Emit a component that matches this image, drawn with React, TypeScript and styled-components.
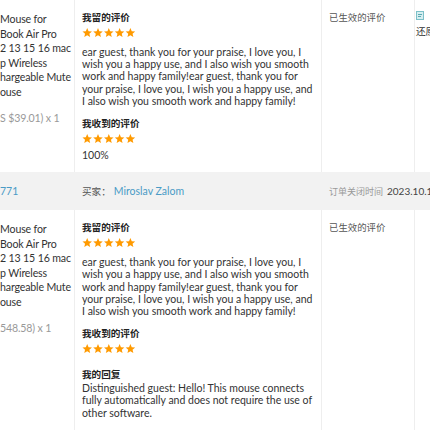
import styled, { createGlobalStyle } from 'styled-components';

const GlobalStyle = createGlobalStyle`
  html, body {
    margin: 0;
    padding: 0;
    background: #fff;
  }
  body {
    width: 430px;
    height: 430px;
    overflow: hidden;
    font-family: Lato, "Noto Sans CJK SC", sans-serif;
    color: #333;
  }
`

const StyleTable = styled.div`
  width: 470px;
  display: flex;
  flex-direction: column;
  border-bottom: 1px solid #e6e6e6;
`

const StyleRow = styled.div`
  display: grid;
  grid-template-columns: 75px 247px 93px 1fr;
`

const StyleCell = styled.div<{ $last?: boolean }>`
  padding: 11px 7px 11px;
  border-right: ${p => (p.$last ? 'none' : '1px solid #eeeeee')};
  min-width: 0;
`

const StyleProduct = styled.div`
  padding: 12px 0 10px;
  border-right: 1px solid #eeeeee;
  font-size: 10.6px;
  letter-spacing: -0.15px;
  line-height: 14.5px;
  color: #333;
  white-space: nowrap;
  overflow: hidden;
`

const StylePrice = styled.div`
  margin-top: 12px;
  color: #999;
`

const StyleTitle = styled.div<{ $gap?: number }>`
  font-size: 9.6px;
  line-height: 14px;
  font-weight: 700;
  color: #222;
  margin-top: ${p => p.$gap ?? 0}px;
`

const StyleText = styled.p<{ $gap?: number }>`
  margin: ${p => p.$gap ?? 8}px 0 0;
  font-size: 10.5px;
  line-height: 12.2px;
  color: #333;
`

const StyleStars = styled.svg`
  display: block;
  margin-top: 2px;
`

const StyleStatus = styled.div`
  font-size: 9.4px;
  line-height: 14px;
  color: #555;
`

const StyleAction = styled.div`
  display: flex;
  flex-direction: column;
  gap: 5px;
  font-size: 9.6px;
  line-height: 14px;
  color: #333;
`

const StyleBar = styled(StyleRow)`
  background: #f2f2f2;
  height: 38px;
  align-items: center;
  font-size: 10.5px;
`

const StyleBarCell = styled.div<{ $flush?: boolean }>`
  padding-left: ${p => (p.$flush ? 0 : 7)}px;
  white-space: nowrap;
`

const StyleLink = styled.span`
  color: #4a9bc6;
`

const StyleBuyer = styled.span`
  color: #555;
  font-size: 9.6px;
  margin-right: 3px;
`

const StyleMuted = styled.span`
  color: #999;
  font-size: 9px;
  margin-right: 4px;
`

const StyleDate = styled.span`
  color: #444;
  font-size: 10px;
`

const STAR = 'M5 0.4 L6.35 3.55 L9.75 3.85 L7.15 6.1 L7.95 9.5 L5 7.7 L2.05 9.5 L2.85 6.1 L0.25 3.85 L3.65 3.55 Z'

function Stars() {
  return (
    <StyleStars width="56" height="11" viewBox="0 0 56 11">
      {[0, 1, 2, 3, 4].map(i => (
        <path key={i} d={STAR} transform={`translate(${i * 10.8 + 0.2} 0.6)`} fill="#ff9a00" />
      ))}
    </StyleStars>
  )
}

const praise =
  'ear guest, thank you for your praise, I love you, I wish you a happy use, and I also wish you smooth work and happy family!ear guest, thank you for your praise, I love you, I wish you a happy use, and I also wish you smooth work and happy family!'

interface Review {
  product: string[]
  price: string
  received?: string
  reply?: string
  action?: boolean
}

const reviews: Review[] = [
  {
    product: ['Mouse for', 'Book Air Pro', '2 13 15 16 mac', 'p Wireless', 'hargeable Mute', 'ouse'],
    price: 'S $39.01) x 1',
    received: '100%',
    action: true,
  },
  {
    product: ['Mouse for', 'Book Air Pro', '2 13 15 16 mac', 'p Wireless', 'hargeable Mute', 'ouse'],
    price: '548.58) x 1',
    reply: 'Distinguished guest: Hello! This mouse connects fully automatically and does not require the use of other software.',
  },
]

function EditIcon() {
  return (
    <svg width="8" height="9" viewBox="0 0 8 9">
      <rect x="0.5" y="0.5" width="7" height="8" fill="#d6eef0" stroke="#7cc0c8" />
      <rect x="2" y="3" width="4" height="1" fill="#5aa9b3" />
      <rect x="2" y="5" width="3" height="1" fill="#5aa9b3" />
    </svg>
  )
}

function ReviewRow({ review }: { review: Review }) {
  return (
    <StyleRow>
      <StyleProduct>
        {review.product.map(line => (
          <div key={line}>{line}</div>
        ))}
        <StylePrice>{review.price}</StylePrice>
      </StyleProduct>
      <StyleCell>
        <StyleTitle>我留的评价</StyleTitle>
        <Stars />
        <StyleText>{praise}</StyleText>
        <StyleTitle $gap={10}>我收到的评价</StyleTitle>
        <Stars />
        {review.received && <StyleText $gap={5}>{review.received}</StyleText>}
        {review.reply && (
          <>
            <StyleTitle $gap={14}>我的回复</StyleTitle>
            <StyleText $gap={0}>{review.reply}</StyleText>
          </>
        )}
      </StyleCell>
      <StyleCell>
        <StyleStatus>已生效的评价</StyleStatus>
      </StyleCell>
      <StyleCell $last style={{ paddingLeft: 1 }}>
        {review.action && (
          <StyleAction>
            <EditIcon />
            <span>还原</span>
          </StyleAction>
        )}
      </StyleCell>
    </StyleRow>
  )
}

export default function App() {
  return (
    <>
      <GlobalStyle />
      <StyleTable>
        <ReviewRow review={reviews[0]} />
        <StyleBar>
          <StyleBarCell $flush>
            <StyleLink>771</StyleLink>
          </StyleBarCell>
          <StyleBarCell>
            <StyleBuyer>买家：</StyleBuyer>
            <StyleLink>Miroslav Zalom</StyleLink>
          </StyleBarCell>
          <StyleBarCell>
            <StyleMuted>订单关闭时间</StyleMuted>
            <StyleDate>2023.10.15 12:30</StyleDate>
          </StyleBarCell>
          <div />
        </StyleBar>
        <ReviewRow review={reviews[1]} />
      </StyleTable>
    </>
  )
}
